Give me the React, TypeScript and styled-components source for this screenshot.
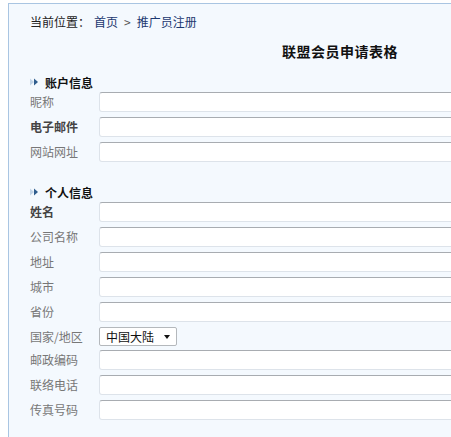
import React from 'react';
import { createGlobalStyle, styled } from 'styled-components';

const GlobalStyle = createGlobalStyle`
  html, body {
    margin: 0;
    padding: 0;
    background: #ffffff;
    overflow: hidden;
  }
  body {
    padding: 3px 0 0 8px;
    font-family: 'Noto Sans CJK SC', 'Noto Sans', sans-serif;
    font-size: 12px;
    color: #333333;
  }
`;

type Field = { label: string; strong?: boolean; kind?: 'select' };

const accountFields: Field[] = [
  { label: '昵称' },
  { label: '电子邮件', strong: true },
  { label: '网站网址' },
];

const personalFields: Field[] = [
  { label: '姓名', strong: true },
  { label: '公司名称' },
  { label: '地址' },
  { label: '城市' },
  { label: '省份' },
  { label: '国家/地区', kind: 'select' },
  { label: '邮政编码' },
  { label: '联络电话' },
  { label: '传真号码' },
];

function SectionArrow() {
  return (
    <svg width="10" height="8" viewBox="0 0 10 8">
      <polygon points="0,0.5 4,4 0,7.5" fill="#c3d5e8" />
      <polygon points="4,0.5 8,4 4,7.5" fill="#2f5d8e" />
    </svg>
  );
}

function FieldRow({ field }: { field: Field }) {
  if (field.kind === 'select') {
    return (
      <Row $compact>
        <Label $strong={field.strong}>{field.label}</Label>
        <SelectWrap>
          <Select defaultValue="cn">
            <option value="cn">中国大陆</option>
            <option value="hk">中国香港</option>
            <option value="tw">中国台湾</option>
          </Select>
        </SelectWrap>
      </Row>
    );
  }
  return (
    <Row>
      <Label $strong={field.strong}>{field.label}</Label>
      <TextInput type="text" />
    </Row>
  );
}

export default function App() {
  return (
    <>
      <GlobalStyle />
      <Panel>
        <Form>
          <Breadcrumb>
            <span>当前位置：</span>
            <Crumb href="#">首页</Crumb>
            <Sep>&gt;</Sep>
            <Crumb href="#">推广员注册</Crumb>
          </Breadcrumb>
          <Title>联盟会员申请表格</Title>

          <SectionTitle>
            <SectionArrow />
            账户信息
          </SectionTitle>
          {accountFields.map((f) => (
            <FieldRow key={f.label} field={f} />
          ))}

          <SectionTitle $spaced>
            <SectionArrow />
            个人信息
          </SectionTitle>
          {personalFields.map((f) => (
            <FieldRow key={f.label} field={f} />
          ))}
        </Form>
      </Panel>
    </>
  );
}

// the box is wider than the window; its right part is clipped
const Panel = styled.div`
  height: calc(100vh - 3px);
  box-sizing: border-box;
  overflow: hidden;
  background: #f4f9fe;
  border-top: 1px solid #a9c5e2;
  border-left: 1px solid #a9c5e2;
`;

const Form = styled.div`
  width: 620px;
  padding: 8px 0 0 21px;
`;

const Breadcrumb = styled.div`
  display: flex;
  align-items: center;
  height: 20px;
  line-height: 20px;
  color: #222222;
`;

const Crumb = styled.a`
  color: #1c3870;
  text-decoration: none;

  &:first-of-type {
    margin-left: 4px;
  }
`;

const Sep = styled.span`
  margin: 0 6px;
  color: #555555;
`;

const Title = styled.h2`
  margin: 9px 0 0;
  height: 20px;
  line-height: 20px;
  font-size: 14px;
  font-weight: bold;
  text-align: center;
  color: #111111;
  letter-spacing: 0.5px;
`;

const SectionTitle = styled.h3<{ $spaced?: boolean }>`
  display: flex;
  align-items: center;
  gap: 5px;
  margin: ${(p) => (p.$spaced ? '15px' : '11px')} 0 0;
  height: 20px;
  font-size: 12px;
  font-weight: bold;
  color: #111111;
`;

const Row = styled.div<{ $compact?: boolean }>`
  display: grid;
  grid-template-columns: 69px 1fr;
  align-items: start;
  height: ${(p) => (p.$compact ? '23px' : '25px')};
`;

const Label = styled.label<{ $strong?: boolean }>`
  height: 20px;
  line-height: 20px;
  color: ${(p) => (p.$strong ? '#444444' : '#777777')};
  font-weight: ${(p) => (p.$strong ? 'bold' : 'normal')};
  white-space: nowrap;
`;

const TextInput = styled.input`
  width: 400px;
  height: 20px;
  box-sizing: border-box;
  margin: 0;
  padding: 0 4px;
  background: #ffffff;
  border: 1px solid #dde3ea;
  border-top-color: #a8acb1;
  border-radius: 3px;
  font: inherit;
  outline: none;
`;

const SelectWrap = styled.div`
  position: relative;
  width: 78px;

  &::after {
    content: '';
    position: absolute;
    right: 7px;
    top: 8px;
    border-left: 3.5px solid transparent;
    border-right: 3.5px solid transparent;
    border-top: 4px solid #111111;
    pointer-events: none;
  }
`;

const Select = styled.select`
  appearance: none;
  -webkit-appearance: none;
  display: block;
  width: 78px;
  height: 19px;
  box-sizing: border-box;
  margin: 0;
  padding: 0 0 0 6px;
  background: #ffffff;
  border: 1px solid #b4b8bc;
  border-radius: 2px;
  font-family: 'Noto Sans CJK SC', 'Noto Sans', sans-serif;
  font-size: 12px;
  line-height: 17px;
  color: #111111;
  outline: none;
`;
